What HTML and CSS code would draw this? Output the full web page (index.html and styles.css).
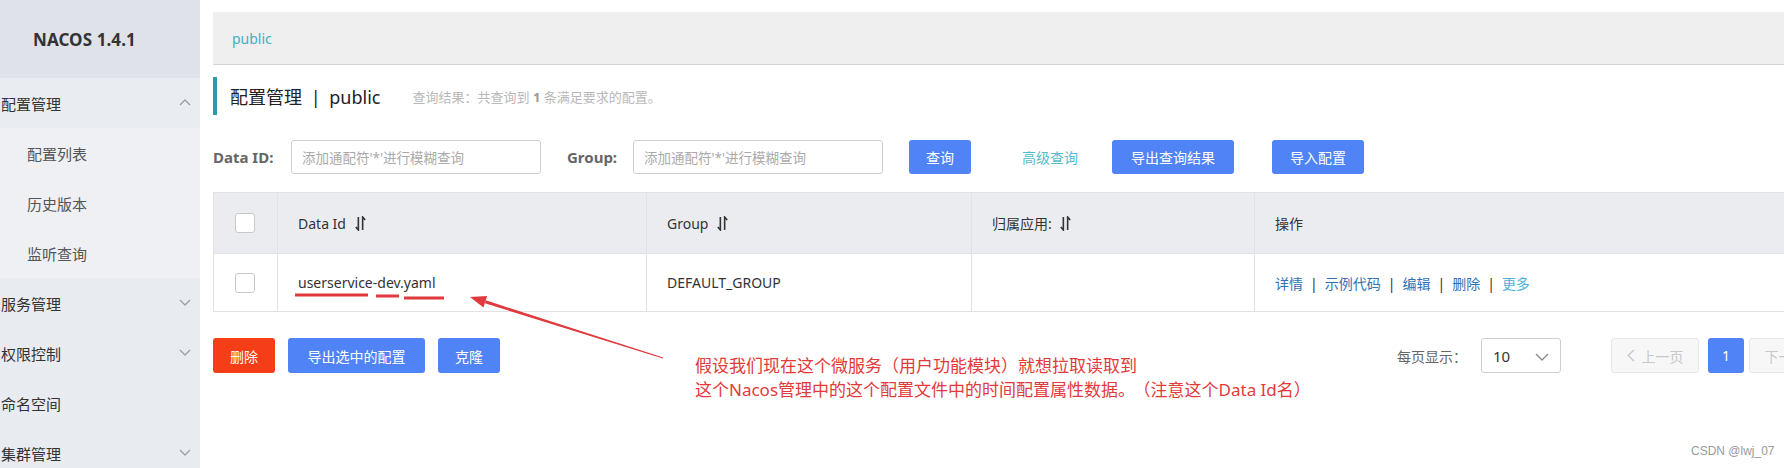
FILE: index.html
```html
<!DOCTYPE html>
<html lang="zh-CN">
<head>
<meta charset="utf-8">
<title>NACOS 1.4.1</title>
<link rel="stylesheet" href="styles.css">
</head>
<body>
<div class="page">
  <aside class="sidebar">
    <div class="brand">NACOS 1.4.1</div>
    <div class="menu-item open">配置管理
      <svg class="chev" viewBox="0 0 12 7"><polyline points="1,6 6,1 11,6"/></svg>
    </div>
    <div class="sub-item">配置列表</div>
    <div class="sub-item">历史版本</div>
    <div class="sub-item">监听查询</div>
    <div class="menu-item">服务管理
      <svg class="chev" viewBox="0 0 12 7"><polyline points="1,1 6,6 11,1"/></svg>
    </div>
    <div class="menu-item">权限控制
      <svg class="chev" viewBox="0 0 12 7"><polyline points="1,1 6,6 11,1"/></svg>
    </div>
    <div class="menu-item">命名空间</div>
    <div class="menu-item">集群管理
      <svg class="chev" viewBox="0 0 12 7"><polyline points="1,1 6,6 11,1"/></svg>
    </div>
  </aside>

  <main class="main">
    <div class="content">
      <div class="crumb">public</div>

      <div class="title-row">
        <h1 class="title">配置管理 <span class="sep">|</span> public</h1>
        <span class="result">查询结果：共查询到 <b>1</b> 条满足要求的配置。</span>
      </div>

      <div class="search-row">
        <label class="lbl lbl-id">Data ID:</label>
        <div class="input">添加通配符'*'进行模糊查询</div>
        <label class="lbl lbl-group">Group:</label>
        <div class="input">添加通配符'*'进行模糊查询</div>
        <button class="btn btn-query">查询</button>
        <a class="adv">高级查询</a>
        <button class="btn btn-export">导出查询结果</button>
        <button class="btn btn-import">导入配置</button>
      </div>

      <table class="grid">
        <colgroup>
          <col class="c-check"><col class="c-id"><col class="c-group"><col class="c-app"><col>
        </colgroup>
        <thead>
          <tr>
            <th><span class="checkbox"></span></th>
            <th>Data Id <svg class="sort" viewBox="0 0 10 14"><path d="M3 1V13L0.6 10.2M7 13V1L9.4 3.8"/></svg></th>
            <th>Group <svg class="sort" viewBox="0 0 10 14"><path d="M3 1V13L0.6 10.2M7 13V1L9.4 3.8"/></svg></th>
            <th>归属应用: <svg class="sort" viewBox="0 0 10 14"><path d="M3 1V13L0.6 10.2M7 13V1L9.4 3.8"/></svg></th>
            <th>操作</th>
          </tr>
        </thead>
        <tbody>
          <tr>
            <td><span class="checkbox"></span></td>
            <td class="dataid">userservice-dev.yaml</td>
            <td>DEFAULT_GROUP</td>
            <td></td>
            <td class="ops"><a>详情</a><i>|</i><a>示例代码</a><i>|</i><a>编辑</a><i>|</i><a>删除</a><i>|</i><a class="more">更多</a></td>
          </tr>
        </tbody>
      </table>

      <div class="bottom-row">
        <div class="actions">
          <button class="btn btn-danger">删除</button>
          <button class="btn btn-export-sel">导出选中的配置</button>
          <button class="btn btn-clone">克隆</button>
        </div>
        <div class="pager">
          <span class="per">每页显示：</span>
          <div class="select">10
            <svg class="sel-chev" viewBox="0 0 14 8"><polyline points="1,1 7,7 13,1"/></svg>
          </div>
          <div class="pg pg-prev"><svg viewBox="0 0 8 14"><polyline points="7,1 1,7 7,13"/></svg>上一页</div>
          <div class="pg pg-cur">1</div>
          <div class="pg pg-next">下一页<svg viewBox="0 0 8 14"><polyline points="1,1 7,7 1,13"/></svg></div>
        </div>
      </div>
    </div>
  </main>

  <svg class="marks" viewBox="0 0 1784 468">
    <line x1="295" y1="295" x2="368" y2="295" />
    <line x1="376" y1="296" x2="399" y2="296" />
    <line x1="404" y1="298" x2="444" y2="298" />
    <polygon class="shaft" points="662.85,358.48 663.15,357.52 485.75,300.37 484.85,303.23"/>
    <polygon class="head" points="470,297 483.5,307.5 487.1,296.1"/>
  </svg>

  <div class="note">假设我们现在这个微服务（用户功能模块）就想拉取读取到<br>这个Nacos管理中的这个配置文件中的时间配置属性数据。<span class="gap">（注意这个Data Id名）</span></div>

  <div class="watermark">CSDN @lwj_07</div>
</div>
</body>
</html>
```

FILE: styles.css
```css
* { box-sizing: border-box; }

html, body {
  margin: 0;
  padding: 0;
  width: 1784px;
  height: 468px;
  overflow: hidden;
  background: #fff;
  font-family: "Noto Sans", "Noto Sans CJK SC", sans-serif;
  color: #333;
}

.page {
  position: relative;
  display: flex;
  width: 1784px;
  height: 468px;
  overflow: hidden;
}

/* ---------- sidebar ---------- */
.sidebar {
  flex: 0 0 200px;
  background: #e8ebf0;
  height: 468px;
}

.brand {
  height: 78px;
  background: #dfe3e9;
  padding-left: 33px;
  display: flex;
  align-items: center;
  font-size: 17px;
  font-weight: 700;
  color: #333;
  letter-spacing: 0.1px;
}

.menu-item, .sub-item {
  height: 50px;
  display: flex;
  align-items: center;
  font-size: 15px;
  position: relative;
}

.menu-item {
  padding-left: 1px;
  color: #333;
}

.menu-item.open { background: #e9ecf0; }

.sub-item {
  padding-left: 27px;
  color: #555;
  background: #eef0f4;
}

.chev {
  position: absolute;
  left: 179px;
  top: 21px;
  width: 12px;
  height: 7px;
  fill: none;
  stroke: #9aa0a8;
  stroke-width: 1.3;
}

/* ---------- main ---------- */
.main {
  flex: 1 1 auto;
  overflow: hidden;
  padding: 12px 0 0 13px;
}

.content {
  width: 1624px;
}

.crumb {
  height: 53px;
  background: #efefef;
  border-bottom: 1px solid #d2d2d2;
  padding-left: 19px;
  display: flex;
  align-items: center;
  font-size: 14px;
  color: #3fb0c6;
}

.title-row {
  margin-top: 12px;
  height: 38px;
  border-left: 4px solid #2a9bab;
  display: flex;
  align-items: center;
  padding-left: 13px;
}

.title {
  margin: 0;
  font-size: 18px;
  font-weight: 400;
  color: #222;
}

.title .sep {
  margin: 0 4px;
}

.result {
  margin-left: 32px;
  font-size: 13px;
  color: #b8b8b8;
}
.result b { color: #999; }

.search-row {
  margin-top: 25px;
  height: 34px;
  display: flex;
  align-items: center;
}

.lbl {
  font-size: 15px;
  font-weight: 700;
  color: #666;
}
.lbl-id { width: 78px; }
.lbl-group { margin-left: 26px; width: 66px; }

.input {
  width: 250px;
  height: 34px;
  border: 1px solid #cfcfcf;
  border-radius: 3px;
  padding-left: 10px;
  display: flex;
  align-items: center;
  font-size: 13.5px;
  color: #aaa;
}

.btn {
  height: 34px;
  border: none;
  border-radius: 3px;
  background: #5083f5;
  color: #fff;
  font-family: inherit;
  font-size: 14px;
  padding: 0;
}

.btn-query { width: 62px; margin-left: 26px; }
.adv {
  margin-left: 51px;
  font-size: 14px;
  color: #55bccc;
}
.btn-export { width: 122px; margin-left: 34px; }
.btn-import { width: 92px; margin-left: 38px; }

/* ---------- table ---------- */
.grid {
  margin-top: 18px;
  width: 100%;
  table-layout: fixed;
  border-collapse: collapse;
  font-size: 14px;
}

.c-check { width: 64px; }
.c-id { width: 369px; }
.c-group { width: 325px; }
.c-app { width: 283px; }

.grid th, .grid td {
  border: 1px solid #e1e2e6;
  text-align: left;
  font-weight: 400;
  padding: 0 0 0 20px;
  color: #333;
}

.grid th {
  height: 61px;
  background: #ebecf0;
}

.grid td {
  height: 58px;
  background: #fff;
}

.grid th:first-child, .grid td:first-child {
  padding-left: 21px;
}

.grid th:first-child .checkbox {
  margin-top: -4px;
}

.checkbox {
  display: inline-block;
  width: 20px;
  height: 20px;
  border: 1px solid #c8c8c8;
  border-radius: 3px;
  background: #fff;
  vertical-align: middle;
}

.sort {
  width: 11px;
  height: 15px;
  margin-left: 5px;
  vertical-align: -2px;
  fill: none;
  stroke: #333;
  stroke-width: 1.5;
}

.dataid { color: #222; }

.ops a { color: #2f72b4; }
.ops a.more { color: #4fb0d8; }
.ops i {
  font-style: normal;
  color: #333;
  margin: 0 7px;
}

/* ---------- bottom ---------- */
.bottom-row {
  margin-top: 26px;
  height: 35px;
  display: flex;
  justify-content: space-between;
  align-items: center;
}

.actions { display: flex; gap: 13px; }
.actions .btn { height: 35px; }
.btn-danger { width: 62px; background: #f53d17; }
.btn-export-sel { width: 137px; }
.btn-clone { width: 62px; }

.pager {
  display: flex;
  align-items: center;
}

.per {
  font-size: 14px;
  color: #666;
}

.select {
  margin-left: 14px;
  width: 80px;
  height: 35px;
  border: 1px solid #cfcfcf;
  border-radius: 3px;
  padding-left: 11px;
  display: flex;
  align-items: center;
  font-size: 15px;
  color: #333;
  position: relative;
}

.sel-chev {
  position: absolute;
  left: 53px;
  top: 14px;
  width: 14px;
  height: 8px;
  fill: none;
  stroke: #888;
  stroke-width: 1.3;
}

.pg {
  height: 35px;
  border-radius: 3px;
  display: flex;
  align-items: center;
  justify-content: center;
  font-size: 14px;
}

.pg-prev, .pg-next {
  width: 88px;
  border: 1px solid #e6e6e6;
  background: #f7f7f7;
  color: #c8c8c8;
}

.pg-prev { margin-left: 50px; }
.pg-prev svg, .pg-next svg {
  width: 8px;
  height: 13px;
  fill: none;
  stroke: #c8c8c8;
  stroke-width: 1.4;
}
.pg-prev svg { margin-right: 7px; }
.pg-next svg { margin-left: 7px; }

.pg-cur {
  margin-left: 9px;
  margin-right: 5px;
  width: 36px;
  background: #5083f5;
  color: #fff;
}

/* ---------- overlay annotation ---------- */
.marks {
  position: absolute;
  left: 0;
  top: 0;
  width: 1784px;
  height: 468px;
  pointer-events: none;
}

.marks line {
  stroke: #e0393e;
  stroke-width: 3;
}

.marks .shaft, .marks .head {
  fill: #e0393e;
}

.note {
  position: absolute;
  left: 695px;
  top: 354px;
  font-size: 17px;
  line-height: 24px;
  color: #e23a3a;
  white-space: nowrap;
}

.note .gap {
  margin-left: 7px;
}

.watermark {
  position: absolute;
  left: 1691px;
  top: 444px;
  font-size: 12px;
  color: #9a9a9a;
  font-family: "Liberation Sans", sans-serif;
}
```
